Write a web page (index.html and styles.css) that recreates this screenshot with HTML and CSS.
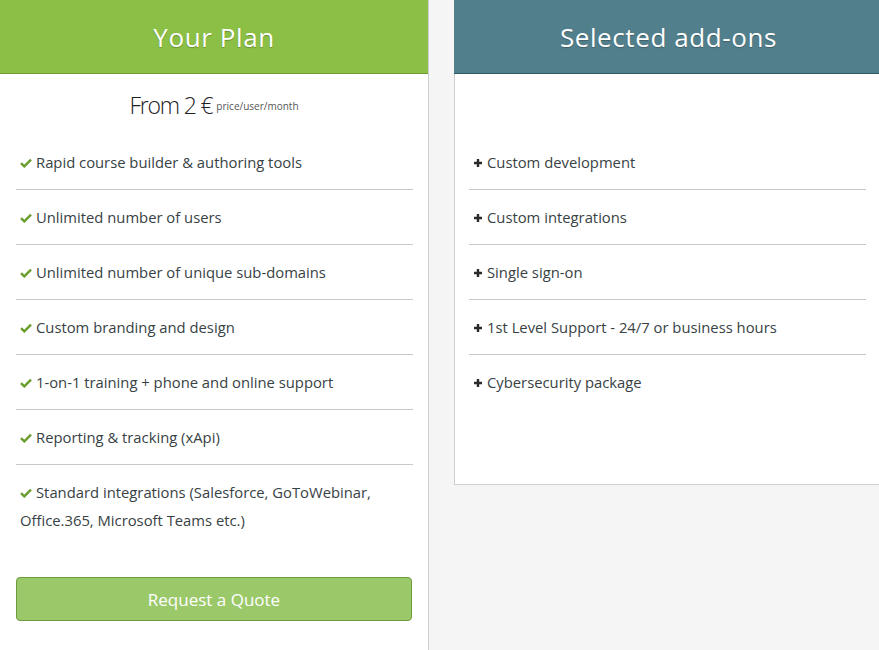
FILE: index.html
```html
<!DOCTYPE html>
<html lang="en">
<head>
    <meta charset="UTF-8">
    <meta name="viewport" content="width=device-width, initial-scale=1.0">
    <title>Pricing</title>
    <link rel="stylesheet" href="styles.css">
</head>
<body>
<div class="plans">
    <div class="plan">
        <div class="plan-header green">Your Plan</div>
        <div class="price">
            <span class="price-big">From 2 €</span>
            <span class="price-unit">price/user/month</span>
        </div>
        <ul class="features">
            <li><svg class="check" viewBox="0 0 12 10"><path d="M1 5.2 L4.3 8.4 L11 1.6" /></svg>Rapid course builder &amp; authoring tools</li>
            <li><svg class="check" viewBox="0 0 12 10"><path d="M1 5.2 L4.3 8.4 L11 1.6" /></svg>Unlimited number of users</li>
            <li><svg class="check" viewBox="0 0 12 10"><path d="M1 5.2 L4.3 8.4 L11 1.6" /></svg>Unlimited number of unique sub-domains</li>
            <li><svg class="check" viewBox="0 0 12 10"><path d="M1 5.2 L4.3 8.4 L11 1.6" /></svg>Custom branding and design</li>
            <li><svg class="check" viewBox="0 0 12 10"><path d="M1 5.2 L4.3 8.4 L11 1.6" /></svg>1-on-1 training + phone and online support</li>
            <li><svg class="check" viewBox="0 0 12 10"><path d="M1 5.2 L4.3 8.4 L11 1.6" /></svg>Reporting &amp; tracking (xApi)</li>
            <li><svg class="check" viewBox="0 0 12 10"><path d="M1 5.2 L4.3 8.4 L11 1.6" /></svg>Standard integrations (Salesforce, GoToWebinar, Office.365, Microsoft Teams etc.)</li>
        </ul>
        <div class="quote-wrap">
            <button class="quote">Request a Quote</button>
        </div>
    </div>

    <div class="plan addons">
        <div class="plan-header teal">Selected add-ons</div>
        <div class="price"></div>
        <ul class="features">
            <li><svg class="plus" viewBox="0 0 10 10"><path d="M5 1 V9 M1 5 H9" /></svg>Custom development</li>
            <li><svg class="plus" viewBox="0 0 10 10"><path d="M5 1 V9 M1 5 H9" /></svg>Custom integrations</li>
            <li><svg class="plus" viewBox="0 0 10 10"><path d="M5 1 V9 M1 5 H9" /></svg>Single sign-on</li>
            <li><svg class="plus" viewBox="0 0 10 10"><path d="M5 1 V9 M1 5 H9" /></svg>1st Level Support - 24/7 or business hours</li>
            <li><svg class="plus" viewBox="0 0 10 10"><path d="M5 1 V9 M1 5 H9" /></svg>Cybersecurity package</li>
        </ul>
    </div>
</div>
</body>
</html>
```

FILE: styles.css
```css
body {
    margin: 0;
    background-color: #f5f5f5;
    font-family: "Open Sans", "DejaVu Sans", sans-serif;
    color: #384244;
}
.plans {
    display: flex;
    align-items: flex-start;
    gap: 25px;
}
.plan {
    width: 428px;
    flex-shrink: 0;
    background-color: #fff;
    border-right: 1px solid #cfcfcf;
    min-height: 700px;
}
.plan.addons {
    width: 440px;
    min-height: 0;
    border-right: none;
    border-left: 1px solid #cfcfcf;
    border-bottom: 1px solid #cfcfcf;
    padding-bottom: 75px;
}
.plan-header {
    height: 73px;
    line-height: 74px;
    text-align: center;
    color: #fff;
    font-size: 26px;
    letter-spacing: 0.6px;
    text-shadow: 0 1px 1px rgba(0, 0, 0, 0.25);
}
.green {
    background-color: #8bbf45;
    border-bottom: 1px solid #6f9b2f;
}
.teal {
    background-color: #527f8c;
    border-bottom: 1px solid #2e5864;
}
.addons .plan-header {
    margin-left: -1px;
    padding-right: 12px;
}
.price {
    height: 61px;
    display: flex;
    justify-content: center;
    align-items: center;
    gap: 4px;
}
.price-big {
    font-size: 23px;
    font-weight: 300;
    letter-spacing: -1.2px;
    color: #1d2224;
}
.price-unit {
    font-size: 10px;
    color: #555;
    margin-top: 2px;
}
.features {
    list-style: none;
    width: 397px;
    margin: 0 0 0 16px;
    padding: 0;
}
.addons .features {
    margin-left: 14px;
}
.features li {
    padding: 13px 4px;
    line-height: 28px;
    font-size: 14.8px;
    border-bottom: 1px solid #c8c8c8;
}
.features li:last-child {
    border-bottom: none;
}
.check {
    width: 12px;
    height: 10px;
    margin-right: 4px;
    fill: none;
    stroke: #6a9e2c;
    stroke-width: 2.4;
}
.plus {
    width: 10px;
    height: 10px;
    margin-right: 4px;
    fill: none;
    stroke: #2a2a2a;
    stroke-width: 2.4;
}
.quote-wrap {
    padding: 30px 16px 0;
}
.quote {
    width: 100%;
    height: 44px;
    background-color: #9bc96a;
    border: 1px solid #6f9b3e;
    border-radius: 4px;
    color: #fff;
    font-family: inherit;
    font-size: 17px;
}
```
